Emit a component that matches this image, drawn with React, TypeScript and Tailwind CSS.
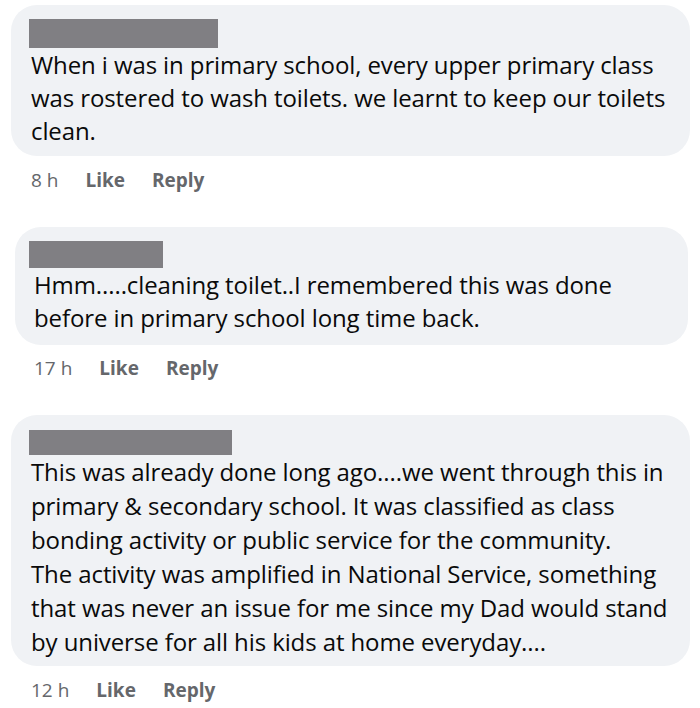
const comments = [
  {
    time: "8 h",
    box: "ml-[11px] mr-[10px] pt-[14px] pb-[9px]",
    name: "w-[189px] h-[29px] ml-[18px]",
    body: "pl-[20px] leading-[33px]",
    meta: "mt-[11px] mb-[34px] pl-[31px]",
    lines: [
      "When i was in primary school, every upper primary class",
      "was rostered to wash toilets. we learnt to keep our toilets",
      "clean.",
    ],
  },
  {
    time: "17 h",
    box: "ml-[15px] mr-[12px] pt-[14px] pb-[11px]",
    name: "w-[134px] h-[27px] ml-[14px]",
    body: "pl-[19px] leading-[33px]",
    meta: "mt-[10px] mb-[34px] pl-[34px]",
    lines: [
      "Hmm.....cleaning toilet..I remembered this was done",
      "before in primary school long time back.",
    ],
  },
  {
    time: "12 h",
    box: "ml-[11px] mr-[10px] pt-[15px] pb-[7px]",
    name: "w-[203px] h-[25px] ml-[18px]",
    body: "pl-[20px] leading-[34px]",
    meta: "mt-[11px] mb-0 pl-[31px]",
    lines: [
      "This was already done long ago....we went through this in",
      "primary & secondary school. It was classified as class",
      "bonding activity or public service for the community.",
      "The activity was amplified in National Service, something",
      "that was never an issue for me since my Dad would stand",
      "by universe for all his kids at home everyday....",
    ],
  },
];

export default function App() {
  return (
    <div className="w-[700px] h-[708px] bg-white pt-[5px] font-['Open_Sans',sans-serif] overflow-hidden">
      {comments.map((c) => (
        <div key={c.time}>
          <div className={`${c.box} bg-[#f0f2f5] rounded-[26px]`}>
            <div className={`${c.name} bg-[#807f83]`} />
            <div className={`${c.body} text-[24px] tracking-[-0.1px] text-[#0a0a0a]`}>
              {c.lines.map((l) => (
                <div key={l} className="whitespace-nowrap">
                  {l}
                </div>
              ))}
            </div>
          </div>
          <div className={`${c.meta} flex items-center gap-[27px] text-[19px] leading-[26px] text-[#65676b]`}>
            <span>{c.time}</span>
            <span className="font-bold">Like</span>
            <span className="font-bold">Reply</span>
          </div>
        </div>
      ))}
    </div>
  );
}
